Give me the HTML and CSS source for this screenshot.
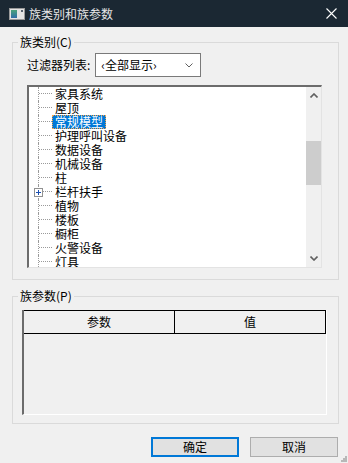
FILE: index.html
```html
<!DOCTYPE html>
<html>
<head>
	<meta charset="utf-8">
	<title>族类别和族参数</title>
	<link rel="stylesheet" href="styles.css">
</head>
<body>
	<div class="titlebar">
		<svg class="app-icon" width="16" height="12" viewBox="0 0 16 12">
			<defs>
				<linearGradient id="ig" x1="0" y1="0" x2="0" y2="1">
					<stop offset="0" stop-color="#4aa37a"/>
					<stop offset="1" stop-color="#2f6ea8"/>
				</linearGradient>
			</defs>
			<rect x="0.5" y="0.5" width="15" height="11" fill="#e4e4e4" stroke="#9a9a9a"/>
			<rect x="2" y="2" width="6" height="8" fill="url(#ig)"/>
			<rect x="12" y="2" width="2" height="2" fill="#5a6470"/>
		</svg>
		<span class="title">族类别和族参数</span>
		<svg class="close" width="11" height="11" viewBox="0 0 11 11">
			<path d="M0.5 0.5 L10.5 10.5 M10.5 0.5 L0.5 10.5" stroke="#ffffff" stroke-width="1.1" fill="none"/>
		</svg>
	</div>

	<fieldset class="group category">
		<legend>族类别(C)</legend>
		<div class="filter-row">
			<label for="filter">过滤器列表:</label>
			<div class="combo" id="filter">
				<span>‹全部显示›</span>
				<svg width="8" height="5" viewBox="0 0 8 5"><path d="M0.5 0.5 L4 4 L7.5 0.5" stroke="#606060" fill="none"/></svg>
			</div>
		</div>
		<div class="tree">
			<ul class="tree-items">
				<li class="node"><span class="branch"></span><span class="label">家具系统</span></li>
				<li class="node"><span class="branch"></span><span class="label">屋顶</span></li>
				<li class="node selected"><span class="branch"></span><span class="label">常规模型</span></li>
				<li class="node"><span class="branch"></span><span class="label">护理呼叫设备</span></li>
				<li class="node"><span class="branch"></span><span class="label">数据设备</span></li>
				<li class="node"><span class="branch"></span><span class="label">机械设备</span></li>
				<li class="node"><span class="branch"></span><span class="label">柱</span></li>
				<li class="node"><span class="branch"><span class="expander"><svg width="7" height="7" viewBox="0 0 7 7"><path d="M1 3.5 H6 M3.5 1 V6" stroke="#1c4fb0" fill="none"/></svg></span></span><span class="label">栏杆扶手</span></li>
				<li class="node"><span class="branch"></span><span class="label">植物</span></li>
				<li class="node"><span class="branch"></span><span class="label">楼板</span></li>
				<li class="node"><span class="branch"></span><span class="label">橱柜</span></li>
				<li class="node"><span class="branch"></span><span class="label">火警设备</span></li>
				<li class="node"><span class="branch"></span><span class="label">灯具</span></li>
			</ul>
			<div class="vscroll">
				<div class="arrow"><svg width="8" height="5" viewBox="0 0 8 5"><path d="M0.5 4.5 L4 1 L7.5 4.5" stroke="#606060" stroke-width="1.6" fill="none"/></svg></div>
				<div class="track"><div class="thumb"></div></div>
				<div class="arrow"><svg width="8" height="5" viewBox="0 0 8 5"><path d="M0.5 0.5 L4 4 L7.5 0.5" stroke="#606060" stroke-width="1.6" fill="none"/></svg></div>
			</div>
		</div>
	</fieldset>

	<fieldset class="group params">
		<legend>族参数(P)</legend>
		<div class="param-table">
			<div class="param-head">
				<div class="col name">参数</div>
				<div class="col value">值</div>
			</div>
		</div>
	</fieldset>

	<div class="buttons">
		<button class="btn default">确定</button>
		<button class="btn">取消</button>
	</div>

	<svg class="grip" width="6" height="6" viewBox="0 0 6 6">
		<rect x="4" y="0" width="2" height="2" fill="#b8b8b8"/>
		<rect x="2" y="2" width="2" height="2" fill="#b8b8b8"/>
		<rect x="4" y="2" width="2" height="2" fill="#b8b8b8"/>
		<rect x="0" y="4" width="2" height="2" fill="#b8b8b8"/>
		<rect x="2" y="4" width="2" height="2" fill="#b8b8b8"/>
		<rect x="4" y="4" width="2" height="2" fill="#b8b8b8"/>
	</svg>
</body>
</html>
```

FILE: styles.css
```css
body {
	margin: 0;
	height: 463px;
	overflow: hidden;
	position: relative;
	background: #f0f0f0;
	color: #000;
	font: 12px/16px "Noto Sans CJK SC", "Microsoft YaHei", sans-serif;
}
.titlebar {
	display: flex;
	align-items: center;
	height: 27px;
	padding: 0 11px 0 9px;
	background: #1b2833;
	color: #e6e6e6;
}
.app-icon {
	margin-right: 4px;
}
.title {
	flex: 1;
}

/* group boxes */
.group {
	margin: 7px 9px 0 12px;
	border: 1px solid #dadada;
	min-width: 0;
}
.group legend {
	padding: 0 2px;
	line-height: 16px;
}
.category {
	padding: 3px 16px 11px 14px;
}
.category legend {
	margin-left: -9px;
}
.params {
	margin-top: 8px;
	padding: 6px 11px 8px 9px;
}
.params legend {
	margin-left: -4px;
}

/* filter */
.filter-row {
	display: flex;
	align-items: center;
	gap: 5px;
	height: 24px;
}
.combo {
	display: flex;
	align-items: center;
	justify-content: space-between;
	box-sizing: border-box;
	width: 106px;
	height: 24px;
	padding: 0 7px 0 5px;
	border: 1px solid #7a7a7a;
	background: #fff;
}

/* tree */
.tree {
	display: flex;
	box-sizing: border-box;
	height: 183px;
	margin-top: 8px;
	background: #fff;
	border-top: 2px solid #6c6c6c;
	border-left: 2px solid #6c6c6c;
	border-right: 1px solid #e3e3e3;
	border-bottom: 1px solid #e3e3e3;
}
.tree-items {
	flex: 1;
	margin: 0;
	padding: 0;
	list-style: none;
	overflow: hidden;
}
.node {
	display: flex;
	height: 14px;
	line-height: 14px;
}
.branch {
	position: relative;
	width: 13px;
	margin-left: 9px;
	border-left: 1px dotted #9a9a9a;
}
.branch::before {
	content: "";
	display: block;
	height: 6px;
	border-bottom: 1px dotted #9a9a9a;
}
.expander {
	position: absolute;
	left: -5px;
	top: 3px;
	display: flex;
	box-sizing: border-box;
	width: 9px;
	height: 9px;
	border: 1px solid #919191;
	background: #fff;
}
.label {
	padding: 0 3px;
	white-space: nowrap;
}
.selected .label {
	background: #0078d7;
	color: #fff;
	outline: 1px dotted #f2a650;
	outline-offset: -1px;
}

/* scrollbar */
.vscroll {
	display: flex;
	flex-direction: column;
	width: 15px;
	background: #f0f0f0;
}
.arrow {
	display: flex;
	align-items: center;
	justify-content: center;
	height: 17px;
}
.track {
	flex: 1;
}
.thumb {
	height: 44px;
	margin-top: 37px;
	background: #cdcdcd;
}

/* parameter list */
.param-table {
	box-sizing: border-box;
	height: 105px;
	border-left: 2px solid #6c6c6c;
	border-right: 1px solid #fff;
	border-bottom: 1px solid #fff;
}
.param-head {
	display: flex;
	height: 24px;
	box-sizing: border-box;
	border-top: 1px solid #000;
	border-bottom: 1px solid #000;
	border-right: 1px solid #000;
}
.col {
	display: flex;
	align-items: center;
	justify-content: center;
}
.name {
	width: 150px;
	border-right: 1px solid #000;
}
.value {
	flex: 1;
}

/* buttons */
.buttons {
	display: flex;
	justify-content: flex-end;
	gap: 11px;
	margin-top: 13px;
	padding-right: 10px;
}
.btn {
	box-sizing: border-box;
	width: 88px;
	height: 20px;
	padding: 0;
	background: #e1e1e1;
	border: 1px solid #adadad;
	font: inherit;
	color: #000;
}
.btn.default {
	border: 2px solid #0078d7;
}
.grip {
	position: absolute;
	right: 1px;
	bottom: 1px;
}
```
